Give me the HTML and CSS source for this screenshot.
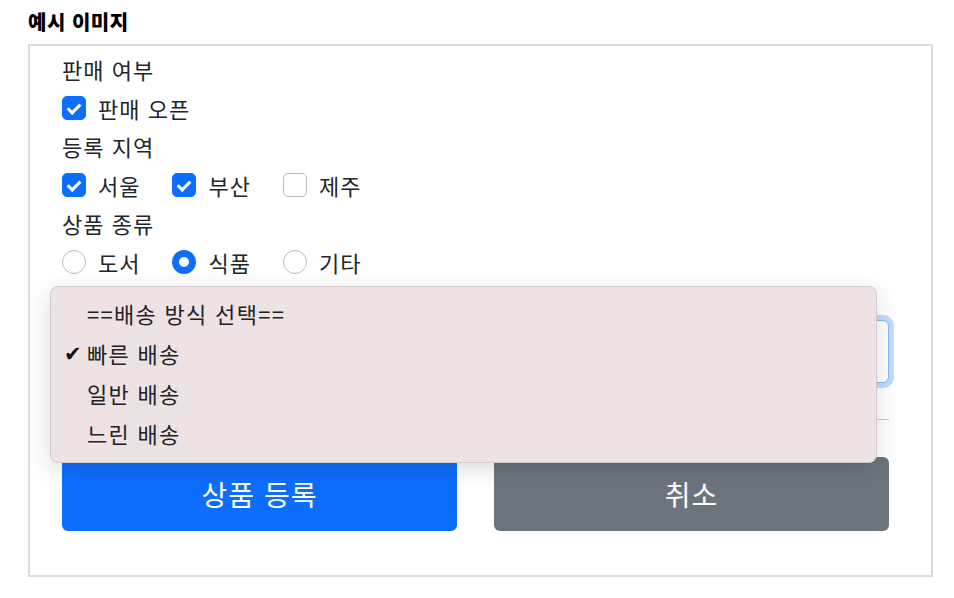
FILE: index.html
```html
<!DOCTYPE html>
<html lang="ko">
<head>
    <meta charset="UTF-8">
    <meta name="viewport" content="width=device-width, initial-scale=1.0">
    <title>예시 이미지</title>
    <link rel="stylesheet" href="styles.css">
</head>
<body>
    <div class="page">
        <h2 class="title">예시 이미지</h2>
        <form class="panel">
            <div class="field-label">판매 여부</div>
            <div class="check-row">
                <label class="check"><input type="checkbox" checked> 판매 오픈</label>
            </div>

            <div class="field-label">등록 지역</div>
            <div class="check-row">
                <label class="check"><input type="checkbox" checked> 서울</label>
                <label class="check"><input type="checkbox" checked> 부산</label>
                <label class="check"><input type="checkbox"> 제주</label>
            </div>

            <div class="field-label">상품 종류</div>
            <div class="check-row">
                <label class="check"><input type="radio" name="kind"> 도서</label>
                <label class="check"><input type="radio" name="kind" checked> 식품</label>
                <label class="check"><input type="radio" name="kind"> 기타</label>
            </div>

            <select class="delivery is-focused">
                <option>빠른 배송</option>
            </select>

            <hr class="divider">

            <div class="actions">
                <button type="button" class="btn btn-primary">상품 등록</button>
                <button type="button" class="btn btn-secondary">취소</button>
            </div>

            <!-- 열린 배송 방식 목록 -->
            <ul class="option-menu">
                <li>==배송 방식 선택==</li>
                <li class="selected">빠른 배송</li>
                <li>일반 배송</li>
                <li>느린 배송</li>
            </ul>
        </form>
    </div>
</body>
</html>
```

FILE: styles.css
```css
body {
    margin: 0;
    font-family: "Noto Sans CJK KR", "Noto Sans", sans-serif;
    color: #212529;
    background: #fff;
}
.page {
    padding: 8px 21px 0 28px;
}
.title {
    margin: 0 0 8px;
    font-size: 20px;
    line-height: 28px;
    letter-spacing: 0.5px;
    font-weight: 900;
    color: #000;
}
.panel {
    position: relative;
    width: 905px;
    box-sizing: border-box;
    border: 2px solid #dcdcdc;
    padding: 6px 42px 44px 32px;
}
.field-label {
    height: 37px;
    line-height: 35px;
    font-size: 22px;
    letter-spacing: 1px;
}
.check-row {
    display: flex;
    gap: 32px;
    height: 40px;
    align-items: center;
}
.check {
    display: flex;
    align-items: center;
    gap: 12px;
    font-size: 22px;
    letter-spacing: 1px;
    line-height: 1;
    padding-bottom: 2px;
}
.check input {
    appearance: none;
    -webkit-appearance: none;
    position: relative;
    width: 24px;
    height: 24px;
    margin: 0;
    box-sizing: border-box;
    border: 1px solid #bdbdbd;
    background: #fff;
}
input[type="checkbox"] {
    border-radius: 5px;
}
input[type="checkbox"]:checked {
    background: #0d6efd;
    border-color: #0d6efd;
}
input[type="checkbox"]:checked::after {
    content: "";
    position: absolute;
    left: 7px;
    top: 4px;
    width: 5px;
    height: 10px;
    border: solid #fff;
    border-width: 0 3px 3px 0;
    transform: rotate(45deg);
}
input[type="radio"] {
    border-radius: 50%;
}
input[type="radio"]:checked {
    border: 7px solid #0d6efd;
}
.delivery {
    display: block;
    width: 100%;
    height: 63px;
    margin-top: 37px;
    border: 1px solid #ced4da;
    border-radius: 6px;
    appearance: none;
    background: #fff;
    font-size: 20px;
    padding: 0 16px;
}
.delivery.is-focused {
    border-color: #86b7fe;
    box-shadow: 0 0 0 5px rgba(13, 110, 253, 0.25);
}
.divider {
    margin: 36px 0 0;
    border: 0;
    border-top: 1px solid #c8c8c8;
}
.actions {
    display: flex;
    gap: 37px;
    margin-top: 37px;
}
.btn {
    flex: 1;
    height: 74px;
    border: none;
    border-radius: 6px;
    color: #fff;
    font-family: inherit;
    font-size: 28px;
    letter-spacing: 1px;
}
.btn-primary {
    background-color: #0d6efd;
}
.btn-secondary {
    background-color: #6c757d;
}
.option-menu {
    position: absolute;
    left: 20px;
    top: 240px;
    width: 827px;
    height: 177px;
    box-sizing: border-box;
    margin: 0;
    padding: 6px 0 0;
    list-style: none;
    background: #ede3e4;
    border: 1px solid #d4cccc;
    border-radius: 8px;
    box-shadow: 0 6px 24px rgba(0, 0, 0, 0.14);
}
.option-menu li {
    position: relative;
    height: 40px;
    line-height: 40px;
    padding-left: 36px;
    font-size: 22px;
    letter-spacing: 1.3px;
    color: #222;
}
.option-menu li.selected::before {
    content: "✔";
    position: absolute;
    left: 13px;
    top: 1px;
    font-family: "DejaVu Sans", sans-serif;
    font-size: 21px;
    color: #111;
}
```
